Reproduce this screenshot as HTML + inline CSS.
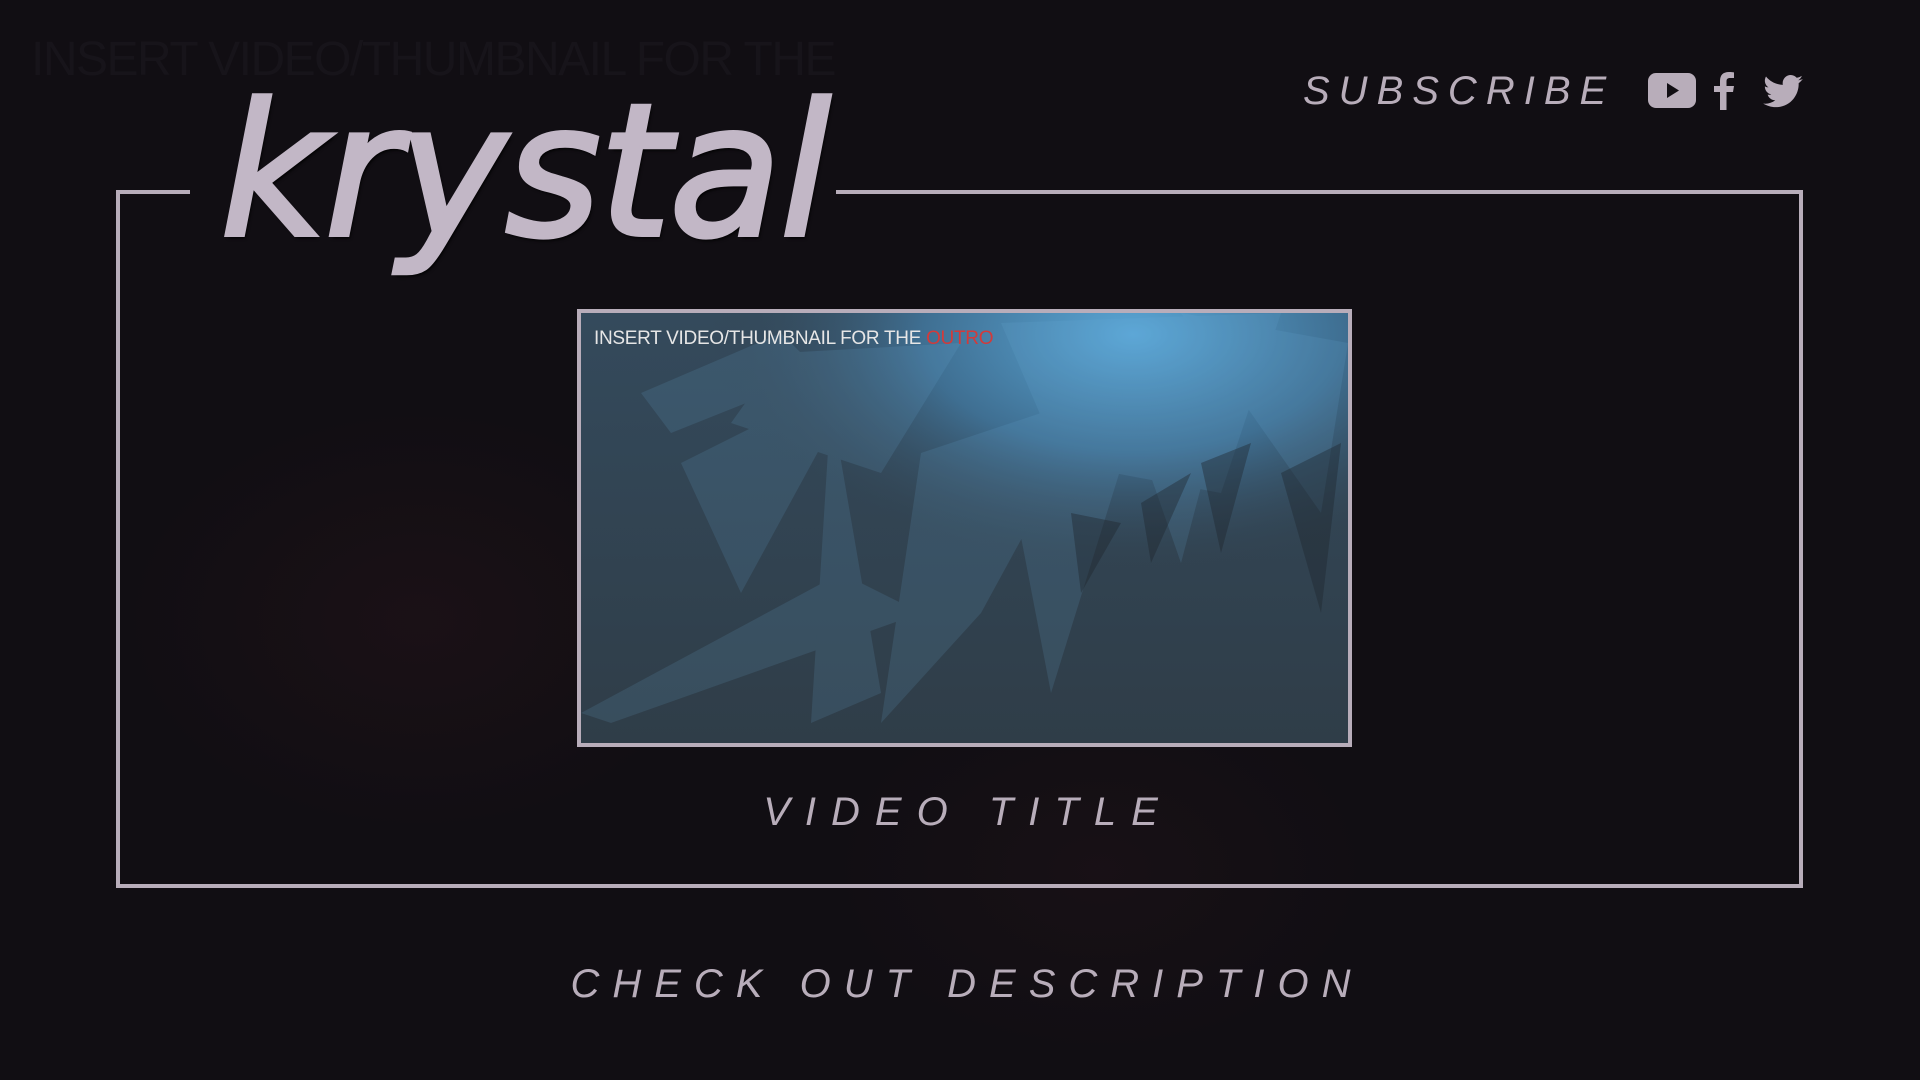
<!DOCTYPE html>
<html><head><meta charset="utf-8"><style>
html,body{margin:0;padding:0}
body{width:1920px;height:1080px;overflow:hidden;position:relative;background:#110e13;font-family:"Liberation Sans",sans-serif}
.bg{position:absolute;inset:0;background:
radial-gradient(ellipse 420px 300px at 420px 620px,rgba(70,30,35,.18),transparent 70%),
radial-gradient(ellipse 380px 260px at 1100px 870px,rgba(60,30,35,.16),transparent 70%);}
.ghost{position:absolute;left:31px;top:32px;font-size:48px;color:#17141a;letter-spacing:-1.5px;white-space:nowrap}
.frame{position:absolute;left:116px;top:190px;width:1679px;height:690px;border:4px solid #b8adba}
.gap{position:absolute;left:190px;top:186px;width:646px;height:12px;background:#110e13}
.logo{position:absolute;left:220px;top:80px;font-size:184px;font-style:italic;font-weight:normal;color:#c2b7c6;line-height:1;font-family:"DejaVu Sans","Liberation Sans",sans-serif;-webkit-text-stroke:4px #c2b7c6;text-shadow:2px 3px 3px #000;white-space:nowrap;letter-spacing:-2px}
.sub{position:absolute;left:1303px;top:69px;font-size:40px;font-style:italic;color:#b8adba;letter-spacing:9px;white-space:nowrap}
.thumb{position:absolute;left:577px;top:309px;width:767px;height:430px;border:4px solid #b8adba;overflow:hidden;background:#33424f}
.thumb span{position:absolute;left:13px;top:15px;font-size:19px;color:#e6e6e6;white-space:nowrap;letter-spacing:-.3px}
.t{position:absolute;left:0;width:1920px;text-align:center;font-style:italic;color:#b8adba;white-space:nowrap}
</style></head><body>
<div class="bg"></div>
<div class="ghost">INSERT VIDEO/THUMBNAIL FOR THE</div>
<div class="frame"></div>
<div class="gap"></div>
<div class="logo">krystal</div>
<div class="sub">SUBSCRIBE</div>
<svg style="position:absolute;left:1648px;top:73px" width="48" height="36" viewBox="0 0 48 36"><rect x="0" y="0" width="48" height="35" rx="8" fill="#b8adba"/><path d="M19 10 L31 17.5 L19 25Z" fill="#110e13"/></svg>
<svg style="position:absolute;left:1712px;top:72px" width="24" height="38" viewBox="0 0 24 38"><path d="M8 38 V20 H2 V14 H8 V9 C8 3 11 0 17 0 C19 0 21 .2 22 .4 V6 H18 C15.5 6 14.5 7 14.5 9.5 V14 H22 L21 20 H14.5 V38Z" fill="#b8adba"/></svg>
<svg style="position:absolute;left:1763px;top:75px" width="40" height="33" viewBox="0 0 24 20"><path d="M24 2.4c-.9.4-1.8.6-2.8.8 1-.6 1.8-1.6 2.2-2.7-1 .6-2 1-3.1 1.2C19.4.7 18.1 0 16.7 0c-2.7 0-4.9 2.2-4.9 4.9 0 .4 0 .8.1 1.1C7.7 5.8 4.1 3.9 1.7.9c-.4.7-.7 1.6-.7 2.5 0 1.7.9 3.2 2.2 4.1-.8 0-1.6-.2-2.2-.6v.1c0 2.4 1.7 4.4 3.9 4.8-.4.1-.8.2-1.3.2-.3 0-.6 0-.9-.1.6 2 2.4 3.4 4.6 3.4-1.7 1.3-3.8 2.1-6.1 2.1-.4 0-.8 0-1.2-.1 2.2 1.4 4.8 2.2 7.5 2.2 9.1 0 14-7.5 14-14v-.6c1-.7 1.8-1.6 2.5-2.5z" fill="#b8adba"/></svg>
<div class="thumb">
<svg width="767" height="430" viewBox="0 0 767 430" style="position:absolute;left:0;top:0">
<defs><radialGradient id="g" cx="0.72" cy="0.05" r="0.55"><stop offset="0" stop-color="#5aa6d6"/><stop offset=".5" stop-color="#3f6f92"/><stop offset="1" stop-color="#33424f" stop-opacity="0"/></radialGradient>
<linearGradient id="b" x1="0" y1="0" x2="0" y2="1"><stop offset="0" stop-color="#344a5c"/><stop offset="1" stop-color="#2f3d48"/></linearGradient></defs>
<rect width="767" height="430" fill="url(#b)"/>
<rect width="767" height="430" fill="url(#g)"/>
<g fill="#6fb0dc" opacity=".14">
<polygon points="200,40 380,30 300,160 150,110"/><polygon points="420,10 700,0 640,180 480,150"/>
<polygon points="0,400 260,260 340,300 30,410"/><polygon points="250,90 300,380 230,410"/>
<polygon points="520,20 650,60 600,250"/><polygon points="100,150 280,60 160,280"/>
<polygon points="340,140 520,80 400,300 300,410"/><polygon points="600,0 767,30 740,200"/>
<polygon points="60,80 200,20 240,60 90,120"/><polygon points="420,120 560,90 470,380"/>
</g>
<g fill="#1f252c" opacity=".4">
<polygon points="490,200 540,210 500,280"/><polygon points="560,190 610,160 570,250"/><polygon points="620,150 670,130 640,240"/><polygon points="700,160 760,130 740,300"/>
</g>
</svg>
<span>INSERT VIDEO/THUMBNAIL FOR THE <b style="font-weight:normal;color:#d33a3a">OUTRO</b></span>
</div>
<div class="t" style="top:790px;font-size:40px;letter-spacing:15px;left:8px">VIDEO TITLE</div>
<div class="t" style="top:962px;font-size:40px;letter-spacing:13px;left:7px">CHECK OUT DESCRIPTION</div>
</body></html>
